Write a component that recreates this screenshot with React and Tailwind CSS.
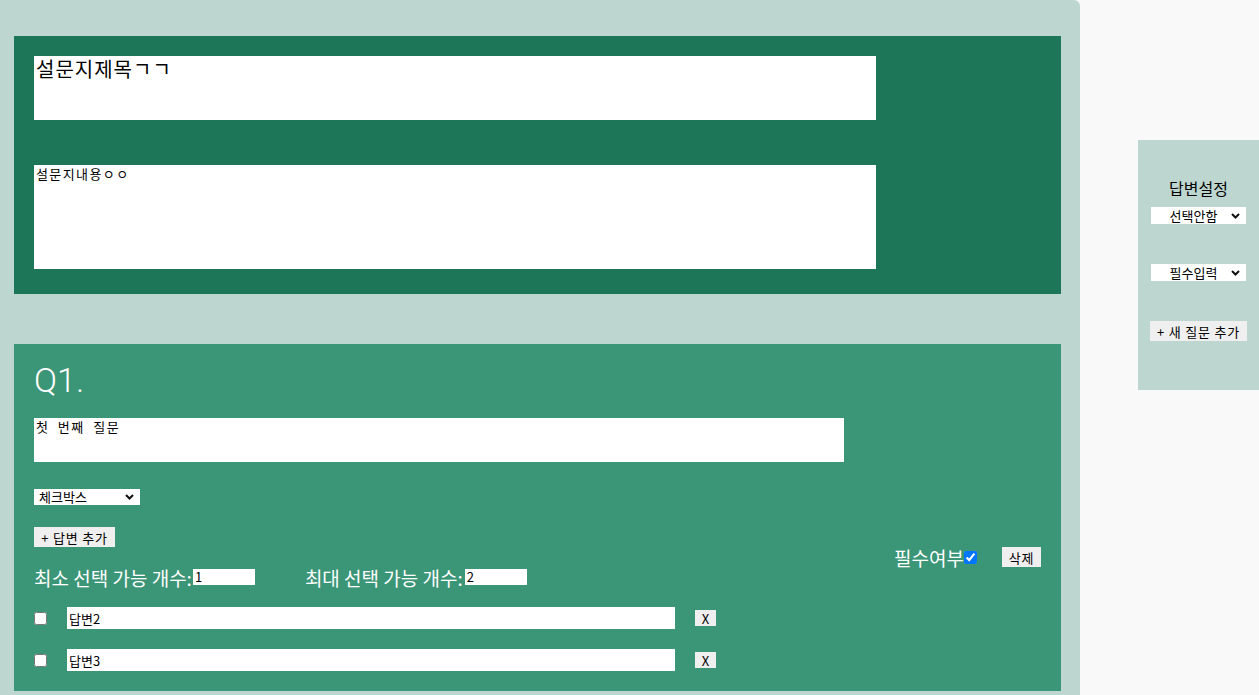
import { useState } from 'react';

const KR = { fontFamily: '"Noto Sans CJK KR", "Noto Sans", sans-serif' };

function Chevron() {
  return (
    <svg width="9" height="6" viewBox="0 0 9 6" className="shrink-0">
      <path d="M1 1l3.5 3.5L8 1" fill="none" stroke="#111" strokeWidth="2" />
    </svg>
  );
}

// Visible box plus a transparent native select laid over it for the dropdown.
function Select({ value, options, className, center = false }) {
  const [current, setCurrent] = useState(value);
  return (
    <div className={`relative flex items-center bg-white pl-[5px] pr-[6px] ${className}`}>
      <span
        className={`flex-1 text-[13px] leading-[16px] text-black ${center ? 'text-center' : 'text-left'}`}
      >
        {current}
      </span>
      <Chevron />
      <select
        value={current}
        onChange={(e) => setCurrent(e.target.value)}
        className="absolute inset-0 cursor-pointer opacity-0"
      >
        {options.map((o) => (
          <option key={o}>{o}</option>
        ))}
      </select>
    </div>
  );
}

function GrayButton({ children, className }) {
  return (
    <button
      className={`bg-[#efefef] text-[13px] leading-none tracking-[0.8px] text-black ${className}`}
      style={KR}
    >
      {children}
    </button>
  );
}

function AnswerRow({ label, className }) {
  return (
    <div className={`flex h-[22px] items-center ${className}`}>
      <input type="checkbox" className="m-0 h-[13px] w-[13px]" />
      <input
        defaultValue={label}
        className="ml-[20px] h-[22px] w-[608px] bg-white px-[2px] text-[13px] text-black outline-none"
        style={KR}
      />
      <GrayButton className="ml-[20px] h-[16px] w-[21px] tracking-normal">X</GrayButton>
    </div>
  );
}

export default function App() {
  const [required, setRequired] = useState(true);

  return (
    <div className="flex min-h-[695px] w-full items-start bg-[#f9f9f9]" style={KR}>
      {/* Main column */}
      <div className="min-h-[695px] w-[1080px] shrink-0 rounded-tr-[6px] bg-[#bdd6d0] pb-[4px] pl-[14px] pr-[19px] pt-[36px]">
        {/* Survey header */}
        <div className="flex flex-col bg-[#1e7659] px-[20px] pb-[25px] pt-[20px]">
          <textarea
            defaultValue="설문지제목ㄱㄱ"
            className="h-[64px] w-[842px] resize-none bg-white px-[2px] py-0 text-[20px] leading-[26px] tracking-[1px] text-black outline-none"
            style={KR}
          />
          <textarea
            defaultValue="설문지내용ㅇㅇ"
            className="mt-[45px] h-[104px] w-[842px] resize-none bg-white px-[2px] py-0 text-[13px] leading-[17px] tracking-[1.4px] text-black outline-none"
            style={KR}
          />
        </div>

        {/* Question card */}
        <div className="mt-[50px] flex bg-[#3b9577] pb-[20px] pl-[20px] pr-[20px] pt-[16px]">
          <div className="flex flex-1 flex-col items-start">
            <h2
              className="h-[40px] text-[34px] font-light leading-[40px] text-white"
              style={{ fontFamily: 'Roboto, "Noto Sans", sans-serif' }}
            >
              Q1.
            </h2>
            <textarea
              defaultValue="첫 번째 질문"
              className="mt-[18px] h-[44px] w-[810px] resize-none bg-white px-[2px] py-0 text-[13px] leading-[17px] tracking-[1.5px] text-black outline-none [word-spacing:4px]"
              style={KR}
            />
            <Select
              value="체크박스"
              options={['체크박스', '객관식', '주관식']}
              className="mt-[27px] h-[16px] w-[106px]"
            />
            <GrayButton className="mt-[22px] h-[20px] w-[81px]">+ 답변 추가</GrayButton>

            <div className="mt-[18px] flex h-[24px] items-center text-[19px] text-white">
              <span className="leading-none">최소 선택 가능 개수:</span>
              <input
                defaultValue="1"
                className="ml-[1px] h-[16px] w-[62px] bg-white px-[2px] text-[13px] text-black outline-none"
              />
              <span className="ml-[50px] leading-none">최대 선택 가능 개수:</span>
              <input
                defaultValue="2"
                className="ml-[2px] h-[16px] w-[62px] bg-white px-[2px] text-[13px] text-black outline-none"
              />
            </div>

            <AnswerRow label="답변2" className="mt-[18px]" />
            <AnswerRow label="답변3" className="mt-[20px]" />
          </div>

          <div className="mt-[177px] flex h-[40px] items-center self-start">
            <span className="text-[19px] leading-none text-white">필수여부</span>
            <input
              type="checkbox"
              checked={required}
              onChange={(e) => setRequired(e.target.checked)}
              className="m-0 h-[13px] w-[13px]"
            />
            <GrayButton className="ml-[25px] h-[20px] w-[39px]">삭제</GrayButton>
          </div>
        </div>
      </div>

      {/* Side panel */}
      <div className="ml-[58px] mt-[140px] flex h-[250px] w-[121px] flex-col items-center bg-[#bdd6d0] pt-[39px]">
        <span className="h-[18px] text-[16px] leading-[18px] text-black">답변설정</span>
        <Select
          value="선택안함"
          options={['선택안함', '체크박스', '객관식', '주관식']}
          className="mt-[10px] h-[17px] w-[95px]"
          center
        />
        <Select
          value="필수입력"
          options={['필수입력', '선택입력']}
          className="mt-[40px] h-[17px] w-[95px]"
          center
        />
        <GrayButton className="mt-[40px] h-[20px] w-[97px]">+ 새 질문 추가</GrayButton>
      </div>
    </div>
  );
}
